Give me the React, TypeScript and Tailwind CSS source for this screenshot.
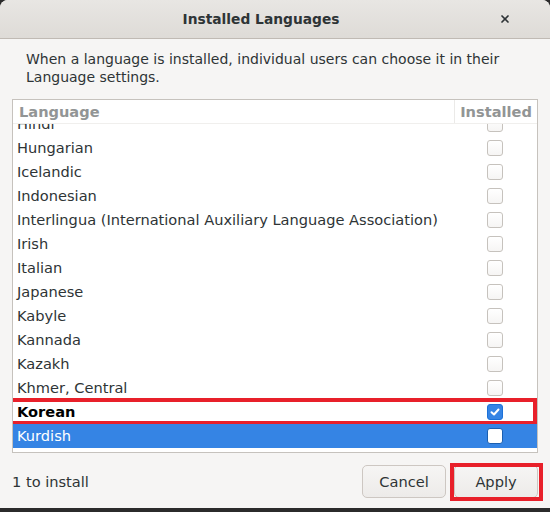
import { X } from "lucide-react"

const languages = [
  "Hindi",
  "Hungarian",
  "Icelandic",
  "Indonesian",
  "Interlingua (International Auxiliary Language Association)",
  "Irish",
  "Italian",
  "Japanese",
  "Kabyle",
  "Kannada",
  "Kazakh",
  "Khmer, Central",
  "Korean",
  "Kurdish",
]

function Checkbox({ checked, onBlue }: { checked?: boolean; onBlue?: boolean }) {
  if (checked) {
    return (
      <div className="w-4 h-4 rounded-[3px] bg-[#3584e4] border border-[#1c71d8] flex items-center justify-center">
        <svg width="10" height="10" viewBox="0 0 10 10">
          <path d="M1.5 5.2 L4 7.5 L8.5 2.5" fill="none" stroke="white" strokeWidth="2" strokeLinecap="round" strokeLinejoin="round" />
        </svg>
      </div>
    )
  }
  return (
    <div
      className={
        onBlue
          ? "w-4 h-4 rounded-[3px] bg-white border border-[#1b5fb0]"
          : "w-4 h-4 rounded-[3px] bg-gradient-to-b from-white to-[#f6f5f4] border border-[#c6c2bd]"
      }
    />
  )
}

export default function App() {
  return (
    <div className="w-[550px] h-[512px] bg-[#2b2b2b] flex flex-col font-['DejaVu_Sans',sans-serif] text-[#2e3436]">
      <div className="h-[508px] rounded-t-[8px] bg-[#f6f5f4] flex flex-col overflow-hidden">
        {/* Header bar */}
        <div className="h-[39px] shrink-0 relative flex items-center justify-center pr-[28px] bg-gradient-to-b from-[#e8e6e3] to-[#dedbd7] border-b border-[#c0bab4]">
          <span className="text-[13.8px] font-bold text-[#2e3436]">Installed Languages</span>
          <X className="absolute right-[39px] top-[13px] w-3 h-3 text-[#2e3436]" strokeWidth={3.5} />
        </div>

        <p className="px-[26px] pt-[11px] text-[14px] leading-[18px]">
          When a language is installed, individual users can choose it in their Language settings.
        </p>

        {/* List box */}
        <div className="mx-3 mt-[13px] h-[354px] bg-white border border-[#c6c2bd] flex flex-col">
          <div className="h-6 shrink-0 flex border-b border-[#f0efed] text-[14.6px] font-bold text-[#929595]">
            <div className="flex-1 pl-[6px] pt-[1px] flex items-center">Language</div>
            <div className="w-[83px] pt-[1px] border-l border-[#ebeae8] flex items-center justify-center">Installed</div>
          </div>
          <div className="flex-1 overflow-hidden">
            <div className="-mt-3">
              {languages.map((name) => {
                const korean = name === "Korean"
                const selected = name === "Kurdish"
                return (
                  <div
                    key={name}
                    className={
                      "h-6 flex items-center text-[14.6px] relative " +
                      (selected ? "bg-[#3584e4] text-white" : "")
                    }
                  >
                    <div className={"flex-1 pl-[4px] " + (korean ? "font-bold text-black" : "")}>{name}</div>
                    <div className="w-[83px] flex justify-center pr-[2px]">
                      <Checkbox checked={korean} onBlue={selected} />
                    </div>
                    {korean && (
                      <div className="absolute -left-[5px] right-0 -top-[2px] -bottom-[1px] border-4 border-[#e8202a] pointer-events-none" />
                    )}
                  </div>
                )
              })}
            </div>
          </div>
        </div>

        {/* Footer */}
        <div className="flex items-center px-3 pt-3">
          <span className="flex-1 text-[14.6px]">1 to install</span>
          <div className="flex gap-2">
            <button className="w-[84px] h-[33px] rounded-[5px] border border-[#cdc7c2] bg-gradient-to-b from-[#f6f5f4] to-[#edebe9] text-[14.6px] text-[#2e3436]">
              Cancel
            </button>
            <div className="relative">
              <button className="w-[84px] h-[33px] rounded-[5px] border border-[#cdc7c2] bg-gradient-to-b from-[#f6f5f4] to-[#edebe9] text-[14.6px] text-[#2e3436]">
                Apply
              </button>
              <div className="absolute -left-[4px] -right-[5px] -top-[2px] -bottom-[3px] border-4 border-[#e8202a] pointer-events-none" />
            </div>
          </div>
        </div>
      </div>
    </div>
  )
}
